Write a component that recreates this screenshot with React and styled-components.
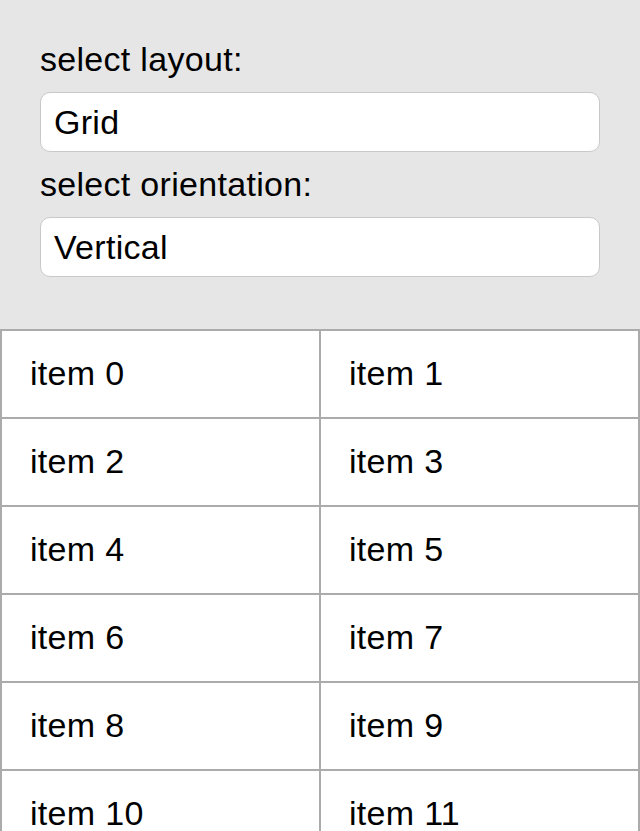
import React from "react";
import styled, { createGlobalStyle } from "styled-components";

const GlobalStyle = createGlobalStyle`
  html, body {
    margin: 0;
    padding: 0;
    background: #ffffff;
  }
  body {
    font-family: "Liberation Sans", Arial, Helvetica, sans-serif;
    color: #000000;
    -webkit-font-smoothing: antialiased;
  }
  * { box-sizing: border-box; }
`;

const Page = styled.div`
  width: 640px;
  display: flex;
  flex-direction: column;
`;

const Header = styled.div`
  background: #e6e6e6;
  padding: 27px 40px 52px;
  display: flex;
  flex-direction: column;
`;

const Label = styled.div`
  font-size: 34px;
  line-height: 40px;
  letter-spacing: 0.3px;
  margin: 12px 0 13px;
  color: #000;
`;

const Field = styled.div`
  height: 60px;
  background: #ffffff;
  border: 1px solid #c9c9c9;
  border-radius: 10px;
  padding: 0 13px;
  display: flex;
  align-items: center;
  font-size: 34px;
  letter-spacing: 0.3px;
  color: #000;
`;

const Grid = styled.div`
  display: grid;
  grid-template-columns: 1fr 1fr;
  border-top: 2px solid #ababab;
  border-left: 2px solid #ababab;
`;

const Cell = styled.div`
  height: 88px;
  border-right: 2px solid #ababab;
  border-bottom: 2px solid #ababab;
  background: #ffffff;
  padding: 0 28px 2px;
  display: flex;
  align-items: center;
  font-size: 34px;
  letter-spacing: 0.3px;
  color: #000;
`;

export default function App() {
  const items = Array.from({ length: 16 }, (_, i) => `item ${i}`);
  return (
    <>
      <GlobalStyle />
      <Page>
        <Header>
          <Label>select layout:</Label>
          <Field>Grid</Field>
          <Label>select orientation:</Label>
          <Field>Vertical</Field>
        </Header>
        <Grid>
          {items.map((t) => (
            <Cell key={t}>{t}</Cell>
          ))}
        </Grid>
      </Page>
    </>
  );
}
